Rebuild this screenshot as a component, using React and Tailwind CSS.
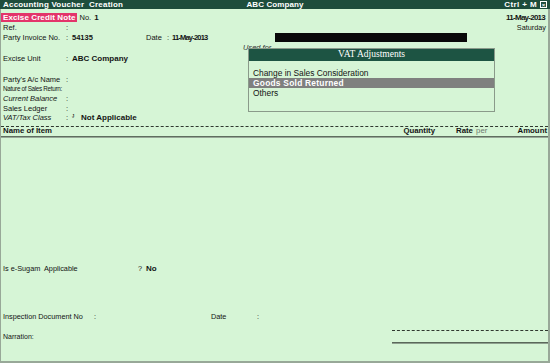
export default function App() {
  const lbl = "w-[63px] shrink-0";
  const colon = "w-[6px] shrink-0";
  return (
    <div className="w-[550px] h-[363px] bg-[#d6f5d6] relative overflow-hidden flex flex-col text-[#141414] leading-none font-['Liberation_Sans',Arial,sans-serif] text-[7.5px]">
      {/* title bar */}
      <div className="h-[9px] bg-[#1e4d3c] text-white font-bold text-[8px] flex items-center shrink-0">
        <div className="flex-1 pl-[3px] tracking-[0.2px] whitespace-pre">Accounting Voucher  Creation</div>
        <div className="tracking-[0.1px]">ABC Company</div>
        <div className="flex-1 flex justify-end items-center pr-[3px]">
          <span className="tracking-[0.4px] whitespace-pre mr-[3px]">Ctrl + M</span>
          <span className="w-[7px] h-[7px] border border-white flex items-center justify-center text-[6px] leading-none">×</span>
        </div>
      </div>

      {/* body */}
      <div className="flex-1 flex flex-col border-l border-r-2 border-b-2 border-[#98a898]">
        {/* row 1 */}
        <div className="mt-[4px] h-[10px] flex items-center">
          <div className="h-[9px] self-start bg-[#e3346a] text-white font-bold text-[8px] flex items-center pl-[2px] pr-[1px] tracking-[0.1px]">Excise Credit Note</div>
          <span className="ml-[3px]">No.</span>
          <span className="ml-[3px] font-bold text-[8px]">1</span>
          <div className="flex-1" />
          <span className="font-bold text-[8px] tracking-[-0.75px] pr-[3px] self-start pt-[1px]">11-May-2013</span>
        </div>
        <div className="h-[10px] flex items-center pl-[2px]">
          <span className={lbl}>Ref.</span>
          <span className={colon}>:</span>
          <div className="flex-1" />
          <span className="pr-[2px] text-[7.3px]">Saturday</span>
        </div>
        <div className="h-[10px] flex items-center pl-[2px]">
          <span className={lbl}>Party Invoice No.</span>
          <span className={colon}>:</span>
          <span className="w-[74px] shrink-0 font-bold">54135</span>
          <span className="w-[21px] shrink-0">Date</span>
          <span className="w-[5px] shrink-0">:</span>
          <span className="font-bold text-[7.5px] tracking-[-0.8px]">11-May-2013</span>
        </div>
        <div className="h-[11px]" />
        <div className="h-[10px] flex items-center pl-[2px]">
          <span className={lbl}>Excise Unit</span>
          <span className={colon}>:</span>
          <span className="font-bold text-[8px]">ABC Company</span>
        </div>
        <div className="h-[11px]" />
        <div className="h-[9.5px] flex items-center pl-[2px]">
          <span className={lbl}>Party's A/c Name</span>
          <span className={colon}>:</span>
        </div>
        <div className="h-[9.5px] flex items-center pl-[2px]">
          <span className="w-[65px] shrink-0 text-[6.3px] tracking-[-0.3px] whitespace-nowrap">Nature of Sales Return:</span>
        </div>
        <div className="h-[9.5px] flex items-center pl-[2px]">
          <span className={lbl + " italic"}>Current Balance</span>
          <span className={colon}>:</span>
        </div>
        <div className="h-[9.5px] flex items-center pl-[2px]">
          <span className={lbl}>Sales Ledger</span>
          <span className={colon}>:</span>
        </div>
        <div className="h-[9.5px] flex items-center pl-[2px]">
          <span className={lbl + " italic"}>VAT/Tax Class</span>
          <span className={colon}>:</span>
          <span className="w-[9px] shrink-0 font-bold text-[6px] self-start pt-[1px]">ᴶ</span>
          <span className="font-bold text-[8px]">Not Applicable</span>
        </div>

        {/* table header */}
        <div className="mt-[3px] border-t border-dashed border-[#2f382f] h-[10px] flex items-center font-bold text-[7.8px]">
          <span className="flex-1 pl-[2px]">Name of Item</span>
          <span className="w-[40px] text-right">Quantity</span>
          <span className="ml-[21px] w-[60px]">
            Rate <span className="font-normal text-[#6f7a6f] ml-[1px]">per</span>
          </span>
          <span className="w-[32px] text-right pr-[1px]">Amount</span>
        </div>
        <div className="h-[2px] bg-[#5f6e5f] border-b border-[#98a898]" />

        <div className="h-[126px]" />
        <div className="h-[10px] flex items-center pl-[2px] text-[7.3px]">
          <span className="w-[135px] shrink-0 whitespace-pre">Is e-Sugam  Applicable</span>
          <span className="w-[8px] shrink-0">?</span>
          <span className="font-bold text-[8px]">No</span>
        </div>
        <div className="h-[38px]" />
        <div className="h-[10px] flex items-center pl-[2px] text-[7.3px]">
          <span className="w-[91px] shrink-0">Inspection Document No</span>
          <span className="w-[117px] shrink-0">:</span>
          <span className="w-[46px] shrink-0">Date</span>
          <span>:</span>
        </div>
        <div className="h-[8px]" />
        <div className="h-[14px] flex">
          <div className="flex-1 flex items-center pl-[2px] text-[7px]">Narration:</div>
          <div className="w-[156px] flex flex-col justify-between">
            <div className="border-t border-dashed border-[#2f382f]" />
            <div className="h-[2px] bg-[#5a685a] border-b border-[#8ea08e]" />
          </div>
        </div>
        <div className="flex-1" />
      </div>

      {/* redaction bar */}
      <div className="absolute left-[275px] top-[33px] w-[192px] h-[9px] bg-[#080808]" />
      {/* Used for (partly hidden under popup) */}
      <div className="absolute left-[243px] top-[44px] italic text-[7.5px] text-[#333]">Used for...</div>

      {/* popup */}
      <div className="absolute left-[248px] top-[48px] w-[247px] h-[64px] border border-[#8a9a8a] bg-[#d6f5d6] flex flex-col">
        <div className="h-[12px] bg-[#1d5443] text-white flex items-center justify-center font-['Liberation_Serif',serif] text-[9.5px]">VAT Adjustments</div>
        <div className="pt-[7px] text-[8.4px]">
          <div className="h-[10px] flex items-center pl-[4px]">Change in Sales Consideration</div>
          <div className="h-[10px] flex items-center pl-[4px] bg-[#7f807f] text-white font-bold tracking-[0.25px]">Goods Sold Returned</div>
          <div className="h-[10px] flex items-center pl-[4px]">Others</div>
        </div>
      </div>
    </div>
  );
}
